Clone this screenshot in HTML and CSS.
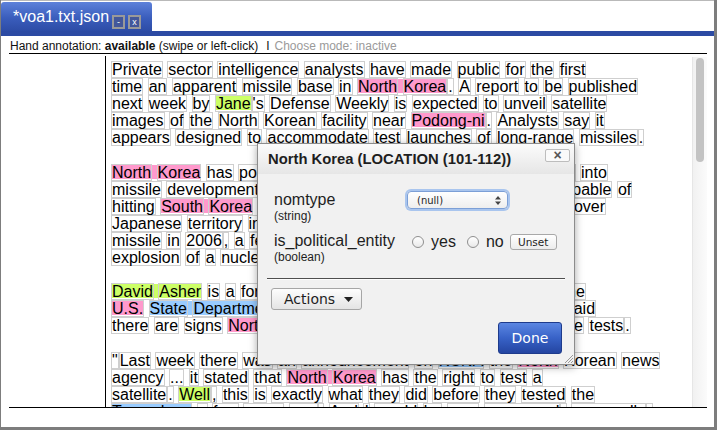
FILE: index.html
```html
<!DOCTYPE html>
<html>
<head>
<meta charset="utf-8">
<link rel="stylesheet" href="styles.css">
</head>
<body>
<div class="window">
  <div class="tabbar">
    <div class="tab">
      <span class="tab-title">*voa1.txt.json</span>
      <span class="tbtn">-</span>
      <span class="tbtn">x</span>
    </div>
  </div>
  <div class="band"></div>
  <div class="status">Hand annotation: <b>available</b> (swipe or left-click)<span class="sep">I</span><span class="inactive">Choose mode: inactive</span></div>
  <div class="wrap">
    <div class="panel">
      <div class="text">
<span class="w">Private</span> <span class="w">sector</span> <span class="w">intelligence</span> <span class="w">analysts</span> <span class="w">have</span> <span class="w">made</span> <span class="w">public</span> <span class="w">for</span> <span class="w">the</span> <span class="w">first</span><br>
<span class="w">time</span> <span class="w">an</span> <span class="w">apparent</span> <span class="w">missile</span> <span class="w">base</span> <span class="w">in</span> <span class="a p"><span class="w">North</span> <span class="w">Korea</span></span><span class="w">.</span> <span class="w">A</span> <span class="w">report</span> <span class="w">to</span> <span class="w">be</span> <span class="w">published</span><br>
<span class="w">next</span> <span class="w">week</span> <span class="w">by</span> <span class="a g"><span class="w">Jane</span></span><span class="w">'s</span> <span class="w">Defense</span> <span class="w">Weekly</span> <span class="w">is</span> <span class="w">expected</span> <span class="w">to</span> <span class="w">unveil</span> <span class="w">satellite</span><br>
<span class="w">images</span> <span class="w">of</span> <span class="w">the</span> <span class="w">North</span> <span class="w">Korean</span> <span class="w">facility</span> <span class="w">near</span> <span class="a p"><span class="w">Podong-ni</span></span><span class="w">.</span> <span class="w">Analysts</span> <span class="w">say</span> <span class="w">it</span><br>
<span class="w">appears</span> <span class="w">designed</span> <span class="w">to</span> <span class="w">accommodate</span> <span class="w">test</span> <span class="w">launches</span> <span class="w">of</span> <span class="w">long-range</span> <span class="w">missiles</span><span class="w">.</span><br>
<br>
<span class="a p"><span class="w">North</span> <span class="w">Korea</span></span> <span class="w">has</span> <span class="w">poured</span> <span class="w">a</span> <span class="w">considerable</span> <span class="w">measures</span> <span class="w">of</span> <span class="w">resources</span> <span class="w">into</span><br>
<span class="w">missile</span> <span class="w">development</span><span class="w">,</span> <span class="w">and</span> <span class="w">it</span> <span class="w">now</span> <span class="w">already</span> <span class="w">has</span> <span class="w">many</span> <span class="w">missiles</span> <span class="w">capable</span> <span class="w">of</span><br>
<span class="w">hitting</span> <span class="a p"><span class="w">South</span> <span class="w">Korea</span></span> <span class="w">and</span> <span class="w">most</span> <span class="w">of</span> <span class="a p"><span class="w">Japan</span></span><span class="w">.</span> <span class="w">It</span> <span class="w">even</span> <span class="w">fired</span> <span class="w">a</span> <span class="w">missile</span> <span class="w">over</span><br>
<span class="w">Japanese</span> <span class="w">territory</span> <span class="w">in</span> <span class="w">1998</span><span class="w">.</span> <span class="w">It</span> <span class="w">test-fired</span> <span class="w">a</span> <span class="w">long-range</span><br>
<span class="w">missile</span> <span class="w">in</span> <span class="w">2006</span><span class="w">,</span> <span class="w">a</span> <span class="w">few</span> <span class="w">months</span> <span class="w">before</span> <span class="w">its</span> <span class="w">first</span> <span class="w">test</span><br>
<span class="w">explosion</span> <span class="w">of</span> <span class="w">a</span> <span class="w">nuclear</span> <span class="w">device</span><span class="w">.</span><br>
<br>
<span class="a g"><span class="w">David</span> <span class="w">Asher</span></span> <span class="w">is</span> <span class="w">a</span> <span class="w">former</span> <span class="w">senior</span> <span class="w">official</span> <span class="w">on</span> <span class="w">East</span> <span class="w">Asia</span> <span class="w">policy</span> <span class="w">at</span> <span class="w">the</span><br>
<span class="a p"><span class="w">U.S.</span></span> <span class="a b"><span class="w">State</span> <span class="w">Department</span></span><span class="w">.</span> <span class="w">He</span> <span class="w">spoke</span> <span class="w">to</span> <span class="w">VOA</span> <span class="w">News</span> <span class="w">and</span> <span class="w">he</span> <span class="w">also</span> <span class="w">said</span><br>
<span class="w">there</span> <span class="w">are</span> <span class="w">signs</span> <span class="a p"><span class="w">North</span> <span class="w">Korea</span></span> <span class="w">could</span> <span class="w">be</span> <span class="w">preparing</span> <span class="w">for</span> <span class="w">more</span> <span class="w">missile</span> <span class="w">tests</span><span class="w">.</span><br>
<br>
<span class="w">"</span><span class="w">Last</span> <span class="w">week</span> <span class="w">there</span> <span class="w">was</span> <span class="w">an</span> <span class="w">announcement</span> <span class="w">on</span> <span class="a b"><span class="w">KCNA</span></span> <span class="w">the</span> <span class="a p"><span class="w">North</span></span> <span class="w">Korean</span> <span class="w">news</span><br>
<span class="w">agency</span> <span class="w">...</span> <span class="w">it</span> <span class="w">stated</span> <span class="w">that</span> <span class="a p"><span class="w">North</span> <span class="w">Korea</span></span> <span class="w">has</span> <span class="w">the</span> <span class="w">right</span> <span class="w">to</span> <span class="w">test</span> <span class="w">a</span><br>
<span class="w">satellite</span><span class="w">.</span> <span class="a g"><span class="w">Well</span></span><span class="w">,</span> <span class="w">this</span> <span class="w">is</span> <span class="w">exactly</span> <span class="w">what</span> <span class="w">they</span> <span class="w">did</span> <span class="w">before</span> <span class="w">they</span> <span class="w">tested</span> <span class="w">the</span><br>
<span class="a b"><span class="w">Taepodong</span></span> <span class="w">a</span> <span class="w">few</span> <span class="w">years</span> <span class="w">ago</span><span class="w">.</span> <span class="w">And</span> <span class="w">I</span> <span class="w">would</span> <span class="w">be</span> <span class="w">very</span> <span class="w">concerned</span><span class="w">,</span> <span class="w">personally</span><span class="w">,</span><br>
<span class="w">if</span> <span class="w">they</span> <span class="w">do</span> <span class="w">it</span> <span class="w">again</span><span class="w">.</span>
      </div>
      <div class="sb"><div class="thumb"></div></div>
    </div>
  </div>

  <div class="dialog">
    <div class="dlg-title">
      <span>North Korea (LOCATION (101-112))</span>
      <span class="dlg-close">×</span>
    </div>
    <div class="dlg-body">
      <div class="row">
        <div class="lbl">nomtype<small>(string)</small></div>
        <div class="select"><span>(null)</span>
          <svg class="updown" width="6" height="9" viewBox="0 0 6 9"><path d="M0 3.5 L3 0 L6 3.5Z M0 5.5 L3 9 L6 5.5Z" fill="#444"/></svg>
        </div>
      </div>
      <div class="row row2">
        <div class="lbl">is_political_entity<small>(boolean)</small></div>
        <div class="ctrls">
          <span class="radio"></span><span class="rlbl">yes</span>
          <span class="radio r2"></span><span class="rlbl">no</span>
          <span class="unset">Unset</span>
        </div>
      </div>
      <div class="rule"></div>
      <div class="actions">Actions<svg width="9" height="5" viewBox="0 0 9 5"><path d="M0 0 H9 L4.5 5Z" fill="#222"/></svg></div>
      <div class="done">Done</div>
    </div>
    <svg class="grip" width="9" height="9" viewBox="0 0 9 9"><path d="M1 9 L9 1 M4 9 L9 4 M7 9 L9 7" stroke="#999" stroke-width="1"/></svg>
  </div>
</div>
</body>
</html>
```

FILE: styles.css
```css
html, body {
  margin: 0;
  padding: 0;
  height: 100%;
}
body {
  background: #7d7d7d;
  font-family: "Liberation Sans", Arial, sans-serif;
  overflow: hidden;
}
.window {
  position: relative;
  margin: 0 3px 0 1px;
  height: 426px;
  border-top: 1px solid #b9b9b9;
  background: #fff;
  overflow: hidden;
}
.tabbar {
  height: 30px;
  display: flex;
  align-items: flex-end;
}
.tab {
  width: 151px;
  height: 29px;
  box-sizing: border-box;
  border-radius: 3px 3px 0 0;
  background: linear-gradient(#5d81da, #3a5dbc 55%, #2d4ca6);
  color: #fff;
  display: flex;
  align-items: center;
  padding-left: 12px;
  font-size: 16px;
}
.tab-title {
  margin-right: 0;
}
.tbtn {
  width: 13px;
  height: 14px;
  box-sizing: border-box;
  border: 2px solid #999;
  background: #43579a;
  color: #fff;
  font-size: 9px;
  line-height: 10px;
  text-align: center;
  margin-left: 3px;
  margin-top: 10px;
}
.band {
  height: 5px;
  background: #2c4aa3;
}
.status {
  height: 14px;
  padding: 3px 0 0 9px;
  font-size: 12px;
  line-height: 14px;
  color: #111;
  white-space: nowrap;
}
.sep {
  margin: 0 5px 0 8px;
}
.inactive {
  color: #9a9a9a;
}
.wrap {
  margin: 0 7px 0 8px;
  border-top: 1px solid #000;
  border-bottom: 1px solid #000;
  padding-top: 2px;
}
.panel {
  display: flex;
  margin-left: 96px;
  height: 351px;
  border-left: 1px solid #000;
}
.text {
  flex: 1;
  overflow: hidden;
  padding: 5px 0 0 5px;
  font-size: 16px;
  line-height: 17.1px;
  white-space: nowrap;
  color: #000;
}
.w {
  display: inline-block;
  border: 1px solid #cfcfcf;
  line-height: 15px;
}
.a {
  --c: #ff99cc;
  background: linear-gradient(transparent 1px, var(--c) 1px, var(--c) calc(100% - 2px), transparent calc(100% - 2px));
}
.a.p { --c: #ff99cc; }
.a.g { --c: #ccff66; }
.a.b { --c: #99ccff; }
.sb {
  width: 14px;
  border-left: 1px solid #e6e6e6;
  background: linear-gradient(to right, #f1f1f1, #fbfbfb);
  margin-top: 1px;
}
.thumb {
  width: 8px;
  height: 104px;
  margin: 1px 0 0 3px;
  border-radius: 4px;
  background: #c3c3c3;
}

/* dialog */
.dialog {
  position: absolute;
  left: 256px;
  top: 142px;
  width: 318px;
  height: 222px;
  box-sizing: border-box;
  border: 1px solid #8c8c8c;
  background: #f1f1f1;
  box-shadow: 0 2px 8px rgba(0, 0, 0, 0.35);
  color: #1e1e1e;
}
.dlg-title {
  height: 30px;
  display: flex;
  justify-content: space-between;
  align-items: center;
  padding: 0 4px 0 10px;
  background: linear-gradient(#fbfbfb, #e6e6e6);
  font-weight: bold;
  font-size: 14.8px;
}
.dlg-close {
  align-self: flex-start;
  margin-top: 5px;
  width: 25px;
  height: 13px;
  box-sizing: border-box;
  border: 1px solid #bdbdbd;
  border-radius: 2px;
  background: #fafafa;
  color: #555;
  font-size: 14px;
  line-height: 10px;
  text-align: center;
  font-weight: bold;
}
.dlg-body {
  padding: 17px 9px 0 9px;
  display: flex;
  flex-direction: column;
}
.row {
  display: flex;
  align-items: flex-start;
  padding-left: 7px;
}
.row2 {
  margin-top: 9px;
}
.lbl {
  width: 133px;
  font-size: 16px;
  line-height: 18px;
}
.lbl small {
  display: block;
  font-size: 12px;
  line-height: 14px;
}
.select {
  width: 101px;
  height: 18px;
  box-sizing: border-box;
  border: 1px solid #7c9fd6;
  border-radius: 4px;
  box-shadow: 0 0 0 2px rgba(110, 160, 235, 0.55);
  background: linear-gradient(#ffffff, #eeeeee);
  display: flex;
  align-items: center;
  justify-content: space-between;
  padding: 0 6px 0 9px;
  font-family: "DejaVu Sans", sans-serif;
  font-size: 10px;
}
.ctrls {
  display: flex;
  align-items: center;
  height: 20px;
  font-size: 16px;
}
.radio {
  width: 12px;
  height: 12px;
  box-sizing: border-box;
  border: 1px solid #8f8f8f;
  border-radius: 50%;
  background: linear-gradient(#fff, #e9e9e9);
  margin-left: 5px;
  margin-right: 7px;
}
.radio.r2 {
  margin-left: 11px;
}
.unset {
  margin-left: 6px;
  width: 47px;
  height: 16px;
  box-sizing: border-box;
  border: 1px solid #a8a8a8;
  border-radius: 3px;
  background: linear-gradient(#fff, #ececec);
  font-family: "DejaVu Sans", sans-serif;
  font-size: 10.5px;
  line-height: 14px;
  text-align: center;
}
.rule {
  margin-top: 14px;
  border-top: 1px solid #4e4e4e;
  border-bottom: 1px solid #fdfdfd;
}
.actions {
  align-self: flex-start;
  margin: 8px 0 0 4px;
  width: 91px;
  height: 22px;
  box-sizing: border-box;
  border: 1px solid #a6a6a6;
  border-radius: 3px;
  background: linear-gradient(#fdfdfd, #e4e4e4);
  display: flex;
  align-items: center;
  padding-left: 12px;
  font-family: "DejaVu Sans", sans-serif;
  font-size: 14px;
}
.actions svg {
  margin-left: 9px;
}
.done {
  align-self: flex-end;
  margin: 12px 3px 0 0;
  width: 64px;
  height: 32px;
  box-sizing: border-box;
  border: 1px solid #1e3b8c;
  border-radius: 3px;
  background: linear-gradient(#5b86e2, #3862c7 50%, #2445a1);
  color: #fff;
  font-family: "DejaVu Sans", sans-serif;
  font-size: 14px;
  line-height: 30px;
  text-align: center;
}
.grip {
  position: absolute;
  right: 1px;
  bottom: 1px;
}
```
